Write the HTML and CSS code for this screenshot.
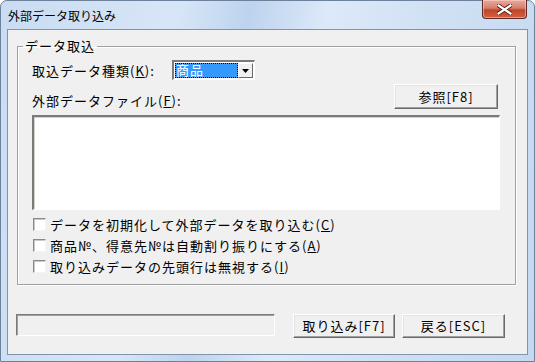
FILE: index.html
```html
<!DOCTYPE html>
<html>
<head>
    <link rel="stylesheet" href="styles.css">
</head>
<body>
    <div class="window">
        <div class="titlebar">
            <span class="title">外部データ取り込み</span>
            <div class="close">
                <svg width="15" height="11" viewBox="0 0 15 11">
                    <path d="M1.5 1.5 L13.5 9.5 M13.5 1.5 L1.5 9.5" stroke="#5a1a12" stroke-width="4" stroke-linecap="square"/>
                    <path d="M1.5 1.5 L13.5 9.5 M13.5 1.5 L1.5 9.5" stroke="#ffffff" stroke-width="2.2" stroke-linecap="square"/>
                </svg>
            </div>
        </div>
        <div class="client">
            <fieldset class="group">
                <legend>データ取込</legend>
                <div class="row kind">
                    <span class="label">取込データ種類(<u>K</u>):</span>
                    <div class="select">
                        <span class="selected">商品</span>
                        <span class="drop">
                            <svg width="7" height="4" viewBox="0 0 7 4"><path d="M0 0 H7 L3.5 4 Z" fill="#000"/></svg>
                        </span>
                    </div>
                </div>
                <div class="row file">
                    <span class="label">外部データファイル(<u>F</u>):</span>
                    <button class="btn browse">参照[F8]</button>
                </div>
                <div class="filebox"></div>
                <div class="checks">
                    <label class="check"><span class="box"></span>データを初期化して外部データを取り込む(<u>C</u>)</label>
                    <label class="check"><span class="box"></span>商品№、得意先№は自動割り振りにする(<u>A</u>)</label>
                    <label class="check"><span class="box"></span>取り込みデータの先頭行は無視する(<u>I</u>)</label>
                </div>
            </fieldset>
            <div class="footer">
                <div class="status"></div>
                <button class="btn import">取り込み[F7]</button>
                <button class="btn back">戻る[ESC]</button>
            </div>
        </div>
    </div>
</body>
</html>
```

FILE: styles.css
```css
body {
    margin: 0;
    background-color: #ffffff;
    font-family: "Noto Sans CJK JP", "Noto Sans", sans-serif;
}
.window {
    width: 535px;
    height: 362px;
    box-sizing: border-box;
    border: 1px solid #6c819b;
    border-radius: 7px 7px 0 0;
    background: linear-gradient(100deg, #c9dcf2 0%, #d7e6f7 30%, #bdd3ee 42%, #dce9f8 55%, #cfe0f4 75%, #c4d8f0 100%);
    display: flex;
    flex-direction: column;
}
.titlebar {
    height: 27px;
    display: flex;
    justify-content: space-between;
    align-items: flex-start;
    padding-left: 7px;
    padding-right: 7px;
}
.title {
    font-size: 12px;
    line-height: 12px;
    margin-top: 9px;
    color: #000;
}
.close {
    width: 45px;
    height: 19px;
    box-sizing: border-box;
    margin-top: -1px;
    border: 1px solid #5b2a26;
    border-top: none;
    border-radius: 0 0 4px 4px;
    background: linear-gradient(#e9a99c 0%, #d6806c 45%, #c0452a 55%, #d2603e 100%);
    box-shadow: inset 0 0 0 1px rgba(255, 220, 210, 0.5);
    display: flex;
    align-items: center;
    justify-content: center;
}
.client {
    margin: 1px 6px 0 6px;
    height: 326px;
    box-sizing: border-box;
    border: 1px solid #8194ac;
    background-color: #f0f0f0;
    padding-top: 9px;
    font-size: 13px;
    letter-spacing: 1px;
    color: #000;
}
.group {
    margin: 0 11px 0 9px;
    padding: 7px 15px 7px 14px;
    border: 1px solid #a0a0a0;
    box-shadow: inset 1px 1px 0 #ffffff, 1px 1px 0 #ffffff;
    min-width: 0;
}
.group legend {
    padding: 0 2px;
    margin-left: -9px;
    line-height: 14px;
}
u {
    text-decoration: underline;
    text-underline-offset: 1px;
}
.row {
    display: flex;
}
.kind {
    height: 20px;
    align-items: center;
}
.kind .label {
    width: 140px;
}
.select {
    width: 83px;
    height: 20px;
    box-sizing: border-box;
    border-style: solid;
    border-width: 2px 1px 1px 2px;
    border-color: #7a7a7a #ffffff #ffffff #7a7a7a;
    background-color: #ffffff;
    display: flex;
    padding: 1px;
}
.selected {
    flex: 1;
    background-color: #3399ff;
    color: #ffffff;
    outline: 1px dotted #000;
    outline-offset: -1px;
    line-height: 14px;
    padding-left: 1px;
}
.drop {
    width: 15px;
    box-sizing: border-box;
    border: 1px solid;
    border-color: #ffffff #696969 #696969 #ffffff;
    background-color: #f0f0f0;
    display: flex;
    align-items: center;
    justify-content: center;
}
.file {
    margin-top: 4px;
    height: 25px;
    justify-content: space-between;
    align-items: flex-end;
}
.file .label {
    line-height: 14px;
    margin-bottom: 1px;
}
.btn {
    font-family: inherit;
    font-size: 13px;
    letter-spacing: 1px;
    color: #000;
    background-color: #f0f0f0;
    border: 1px solid;
    border-color: #ffffff #696969 #696969 #ffffff;
    box-shadow: inset -1px -1px 0 #a0a0a0, inset 1px 1px 0 #e3e3e3;
    padding: 0;
    line-height: 14px;
}
.browse {
    width: 104px;
    height: 25px;
    margin-right: 2px;
}
.filebox {
    margin-top: 6px;
    height: 95px;
    box-sizing: border-box;
    border-style: solid;
    border-width: 2px 1px 1px 2px;
    border-color: #7a7a7a #ffffff #ffffff #7a7a7a;
    box-shadow: inset 1px 1px 0 #d4d0c8;
    background-color: #ffffff;
}
.checks {
    margin-top: 4px;
    display: flex;
    flex-direction: column;
}
.check {
    height: 21px;
    display: flex;
    align-items: center;
    line-height: 14px;
}
.box {
    width: 13px;
    height: 13px;
    box-sizing: border-box;
    border-style: solid;
    border-width: 1px;
    border-color: #8a8a8a #f4f4f4 #f4f4f4 #8a8a8a;
    box-shadow: inset 1px 1px 0 #c8c8c8;
    background-color: #ffffff;
    margin-left: 1px;
    margin-right: 4px;
}
.footer {
    margin-top: 29px;
    margin-left: 8px;
    display: flex;
    align-items: flex-start;
}
.status {
    width: 259px;
    height: 22px;
    box-sizing: border-box;
    border: 1px solid;
    border-color: #7a7a7a #ffffff #ffffff #7a7a7a;
    box-shadow: inset 1px 1px 0 #a0a0a0;
    margin-right: 18px;
}
.import {
    width: 102px;
    height: 24px;
    margin-right: 7px;
}
.back {
    width: 103px;
    height: 24px;
}
```
